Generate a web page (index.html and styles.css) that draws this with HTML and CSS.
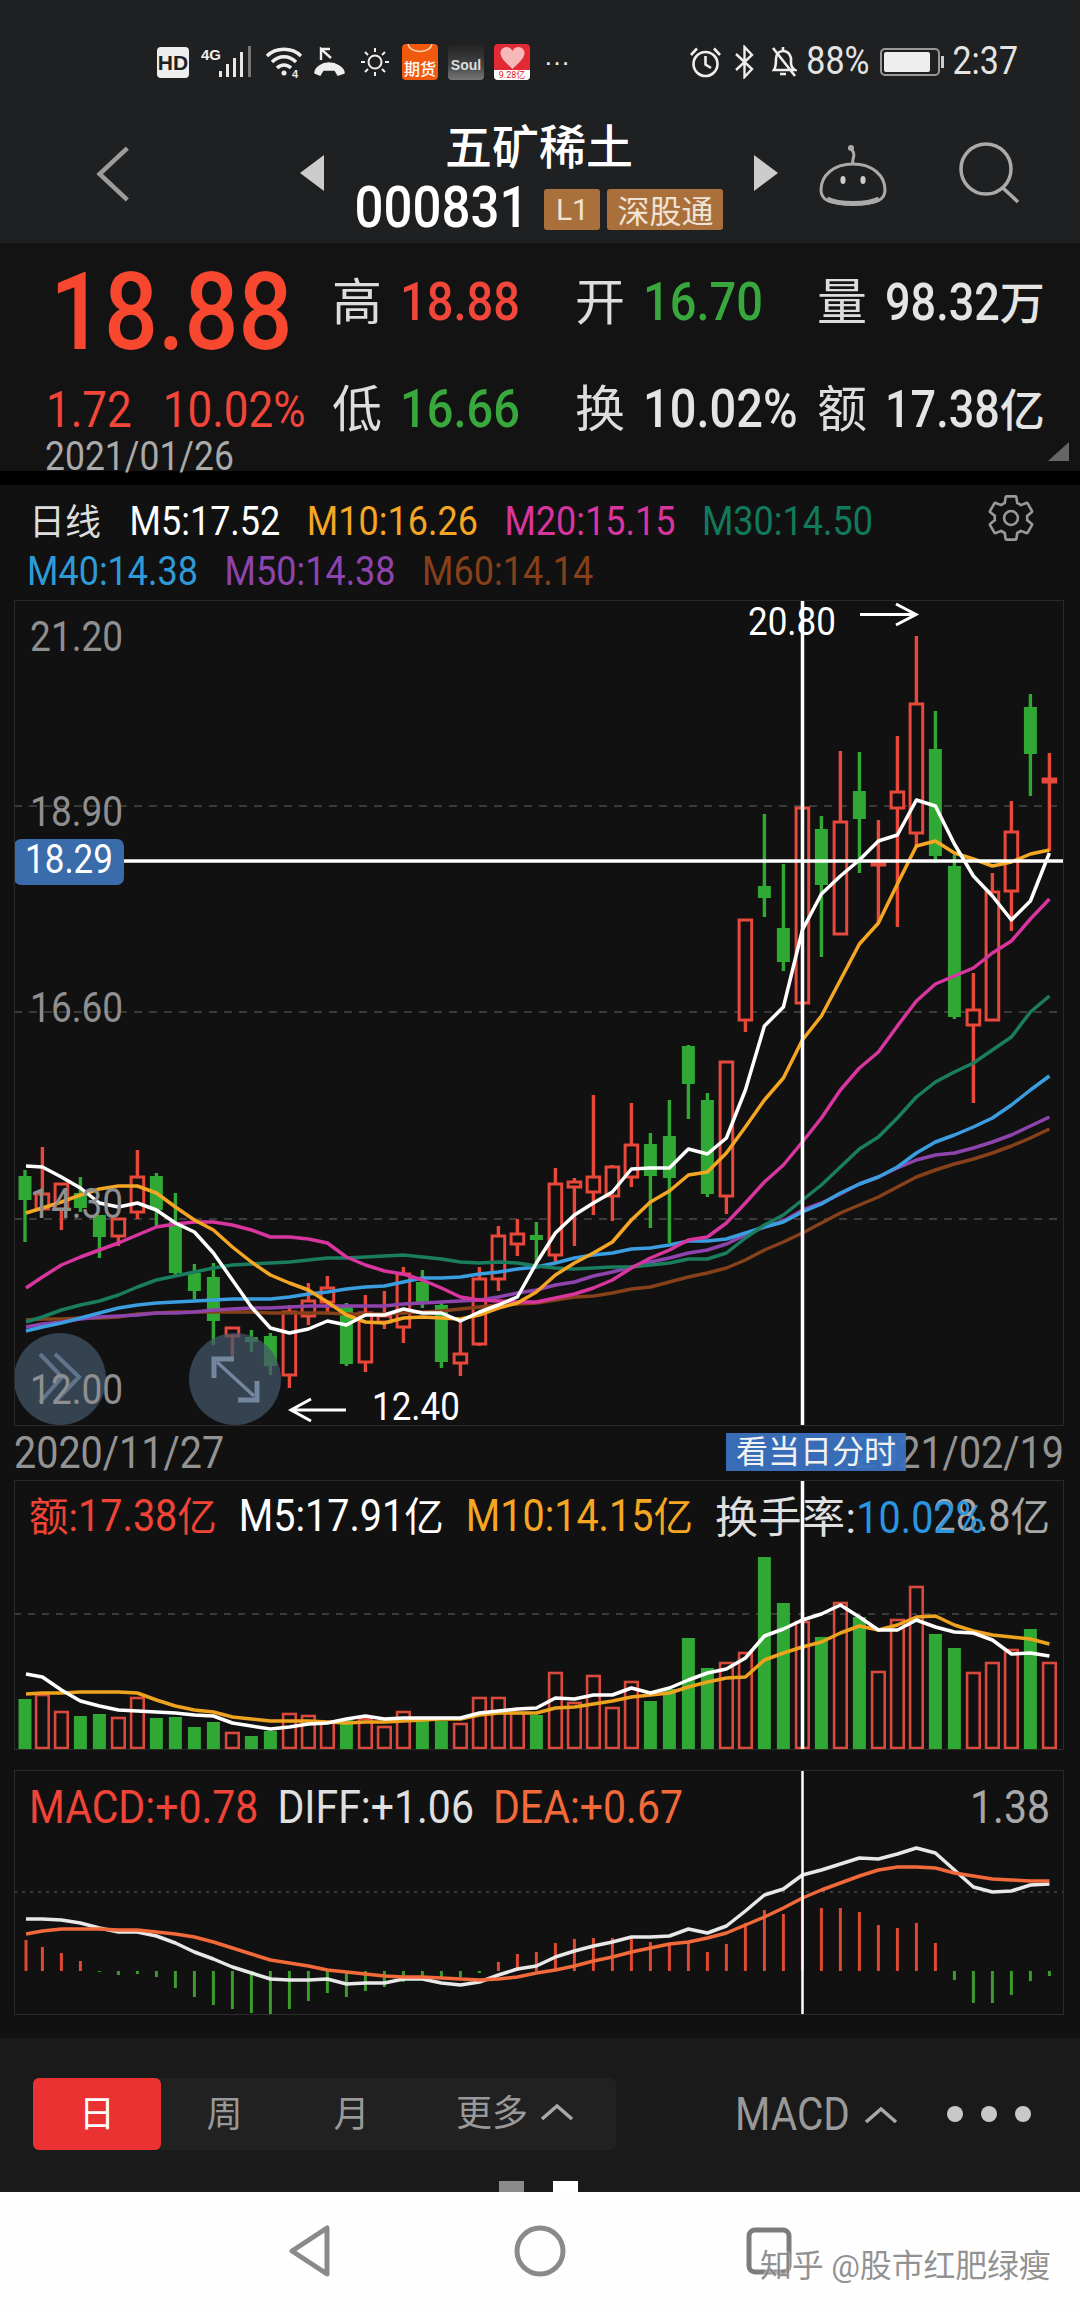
FILE: index.html
```html
<!DOCTYPE html>
<html lang="zh">
<head>
<meta charset="utf-8">
<title>五矿稀土 000831</title>
<link rel="stylesheet" href="styles.css">
</head>
<body>
<div class="screen">
  <header class="top">
    <div class="status">
      <div class="status-left">
        <span class="hd">HD</span>
        <svg class="ic-signal" viewBox="0 0 52 32"><text x="0" y="14" class="sig4g">4G</text><rect x="18" y="25" width="3" height="6" fill="#e8e8e8"/><rect x="25" y="18" width="3" height="13" fill="#e8e8e8"/><rect x="32" y="12" width="3" height="19" fill="#e8e8e8"/><rect x="39" y="6" width="3" height="25" fill="#e8e8e8"/><rect x="47" y="0" width="3" height="31" fill="#777"/></svg>
        <svg class="ic-wifi" viewBox="0 0 38 32" fill="none" stroke="#eee" stroke-width="3.4"><path d="M2 10C11 1 27 1 36 10"/><path d="M7 16C14 9 24 9 31 16"/><path d="M12 22C16 18 22 18 26 22"/><circle cx="19" cy="27" r="2.5" fill="#eee" stroke="none"/><text x="27" y="32" class="wifi4" stroke="none">4</text></svg>
        <svg class="ic-missed" viewBox="0 0 33 30" fill="none" stroke="#eee" stroke-width="3"><path d="M8 13V2L18 11M8 2L17 2" stroke-width="2.4"/><path d="M2 26C2 21 9 16 16 16S31 21 31 26L25 28L22 23H10L7 28Z" fill="#eee" stroke-width="1.5"/></svg>
        <svg class="ic-sun" viewBox="0 0 30 30" fill="none" stroke="#eee" stroke-width="2"><circle cx="15" cy="15" r="6.5"/><path d="M15 1V5M15 25V29M1 15H5M25 15H29M5 5L8 8M22 22L25 25M25 5L22 8M8 22L5 25"/></svg>
        <span class="app app-orange"><svg viewBox="0 0 36 12" class="app-top"><path d="M6 0C8 10 28 10 30 0" fill="none" stroke="#ffd0b0" stroke-width="1.5"/></svg>期货</span>
        <span class="app app-soul">Soul</span>
        <span class="app app-red"><svg viewBox="0 0 24 22" class="app-heart"><path d="M12 21C4 14 1 10 1 6.500C1 3 4 1 6.500 1C9 1 11 2.500 12 4.500C13 2.500 15 1 17.500 1C20 1 23 3 23 6.500C23 10 20 14 12 21Z" fill="#f6b8b8"/></svg><span class="app-red-t">9.28亿</span></span>
        <span class="more">···</span>
      </div>
      <div class="status-right">
        <svg class="ic-alarm" viewBox="0 0 33 32" fill="none" stroke="#eee" stroke-width="2.6"><circle cx="16.500" cy="18" r="12"/><path d="M16.500 10V18.500L22 22M2 9L8 2.500M31 9L25 2.500"/></svg>
        <svg class="ic-bt" viewBox="0 0 23 34" fill="none" stroke="#eee" stroke-width="2.4"><path d="M3 9L19 24L11.500 32V2L19 10L3 25"/></svg>
        <svg class="ic-bell" viewBox="0 0 27 34" fill="none" stroke="#eee" stroke-width="2.6"><path d="M4 25C6 22 6 17 6 14C6 9 9 6 13 6C17 6 20 9 21 13L21 18C21 21 22 23 25 25ZM13 6V2M10 29H16M3 3L25 31"/></svg>
        <span class="pct"><span class="tall">88%</span></span>
        <span class="batt"><span class="batt-fill"></span></span>
        <span class="clock"><span class="tall">2:37</span></span>
      </div>
    </div>
    <div class="nav-head">
      <svg class="ic-back" viewBox="0 0 38 62" fill="none" stroke="#9c9c9c" stroke-width="5"><path d="M35 2L4 31L35 60"/></svg>
      <svg class="tri tri-l" viewBox="0 0 24 36"><path d="M24 0V36L0 18Z" fill="#ccc"/></svg>
      <div class="name">
        <div class="title">五矿稀土</div>
        <div class="code-row">
          <span class="code"><span class="tall">000831</span></span>
          <span class="tag tag-l1">L1</span>
          <span class="tag tag-sg">深股通</span>
        </div>
      </div>
      <svg class="tri tri-r" viewBox="0 0 24 36"><path d="M0 0V36L24 18Z" fill="#ccc"/></svg>
      <svg class="ic-robot" viewBox="0 0 68 62" fill="none" stroke="#aaa" stroke-width="3"><path d="M34 20C32 14 38 12 33 6" /><circle cx="25" cy="4" r="3" fill="#aaa" stroke="none" transform="translate(7 0)"/><path d="M34 20C14 20 2 32 2 46C2 56 10 60 34 60C58 60 66 56 66 46C66 32 54 20 34 20Z"/><path d="M8 55C20 61 48 61 60 55" stroke-width="5"/><ellipse cx="24" cy="36" rx="2.600" ry="4" fill="#ccc" stroke="none"/><ellipse cx="44" cy="36" rx="2.600" ry="4" fill="#ccc" stroke="none"/></svg>
      <svg class="ic-search" viewBox="0 0 62 62" fill="none" stroke="#aaa" stroke-width="3.500"><circle cx="28" cy="27" r="25"/><path d="M45 46L60 60"/></svg>
    </div>
  </header>

  <section class="quote">
    <div class="q-price"><span class="tall big">18.88</span></div>
    <div class="q-cell"><span class="q-l">高</span><span class="q-v up"><span class="tall">18.88</span></span></div>
    <div class="q-cell"><span class="q-l">开</span><span class="q-v down"><span class="tall">16.70</span></span></div>
    <div class="q-cell"><span class="q-l">量</span><span class="q-v white"><span class="tall">98.32</span>万</span></div>
    <div class="q-change up"><span class="tall">1.72</span><span class="tall">10.02%</span></div>
    <div class="q-cell"><span class="q-l">低</span><span class="q-v down"><span class="tall">16.66</span></span></div>
    <div class="q-cell"><span class="q-l">换</span><span class="q-v white q-wide"><span class="tall">10.02%</span></span></div>
    <div class="q-cell"><span class="q-l">额</span><span class="q-v white"><span class="tall">17.38</span>亿</span></div>
    <div class="q-date"><span class="tall">2021/01/26</span></div>
    <span class="corner"></span>
  </section>

  <div class="divider"></div>

  <section class="chart">
    <div class="legend">
      <div class="leg-row">
        <span class="leg-name">日线</span>
        <span class="c-white"><span class="tall">M5:17.52</span></span>
        <span class="c-ora"><span class="tall">M10:16.26</span></span>
        <span class="c-mag"><span class="tall">M20:15.15</span></span>
        <span class="c-grn"><span class="tall">M30:14.50</span></span>
        <svg class="ic-gear" viewBox="0 0 24 24" fill="none" stroke="#999" stroke-width="1.200"><path d="M19.430 12.980c.04-.32.07-.64.07-.98 0-.34-.03-.66-.07-.98l2.110-1.650c.19-.15.24-.42.12-.64l-2-3.460c-.09-.16-.26-.25-.44-.25-.06 0-.12.01-.17.03l-2.490 1c-.52-.4-1.080-.73-1.690-.98l-.38-2.650C14.460 2.180 14.250 2 14 2h-4c-.25 0-.46.18-.49.42l-.38 2.650c-.61.25-1.170.59-1.690.98l-2.490-1c-.06-.02-.12-.03-.18-.03-.17 0-.34.09-.43.25l-2 3.460c-.13.22-.07.49.12.64l2.110 1.650c-.04.32-.07.65-.07.98 0 .33.03.66.07.98l-2.110 1.650c-.19.15-.24.42-.12.64l2 3.460c.09.16.26.25.44.25.06 0 .12-.01.17-.03l2.490-1c.52.4 1.080.73 1.690.98l.38 2.650c.03.24.24.42.49.42h4c.25 0 .46-.18.49-.42l.38-2.650c.61-.25 1.170-.59 1.690-.98l2.490 1c.06.02.12.03.18.03.17 0 .34-.09.43-.25l2-3.460c.12-.22.07-.49-.12-.64l-2.110-1.650z"/><circle cx="12" cy="12" r="3.200"/></svg>
      </div>
      <div class="leg-row">
        <span class="c-blu"><span class="tall">M40:14.38</span></span>
        <span class="c-pur"><span class="tall">M50:14.38</span></span>
        <span class="c-bro"><span class="tall">M60:14.14</span></span>
      </div>
    </div>

    <div class="panel panel-main">
      <svg id="main" viewBox="14 600 1050 826" width="1050" height="826">
        <g id="main-plot"></g>
        <rect x="14" y="839" width="110" height="46" rx="7" fill="#3a6bab"/>
        <path d="M124 861H1063" stroke="#fff" stroke-width="3.500"/>
        <path d="M802.500 600V1426" stroke="#fff" stroke-width="3.500"/>
        <text class="axis-val on-blue" transform="translate(69 873) scale(1 1.140)" text-anchor="middle">18.29</text>
        <text class="axis-val mark" transform="translate(748 635) scale(1 1.100)">20.80</text>
        <path d="M860 614.500H915M896 604L916 614.500L896 625" fill="none" stroke="#fff" stroke-width="3"/>
        <text class="axis-val mark" transform="translate(372 1420) scale(1 1.100)">12.40</text>
        <path d="M346 1410H291M311 1399L291 1410L311 1421" fill="none" stroke="#fff" stroke-width="3"/>
        <circle cx="60" cy="1379" r="46" fill="#44566a" opacity=".72"/>
        <circle cx="235" cy="1379" r="46" fill="#44566a" opacity=".72"/>
        <path d="M40 1354L62 1377L40 1402M55 1354L79 1377L55 1402" fill="none" stroke="#62748c" stroke-width="4"/>
        <path d="M217 1362L254 1396" fill="none" stroke="#75869f" stroke-width="3.500"/>
        <path d="M214 1378V1359H234M257 1381V1400H238" fill="none" stroke="#75869f" stroke-width="5"/>
        <text class="axis" transform="translate(123 651) scale(1 1.140)" text-anchor="end">21.20</text>
        <text class="axis" transform="translate(123 826) scale(1 1.140)" text-anchor="end">18.90</text>
        <text class="axis" transform="translate(123 1022) scale(1 1.140)" text-anchor="end">16.60</text>
        <text class="axis" transform="translate(123 1218) scale(1 1.140)" text-anchor="end">14.30</text>
        <text class="axis" transform="translate(123 1404) scale(1 1.140)" text-anchor="end">12.00</text>
      </svg>
    </div>

    <div class="dates">
      <span><span class="tall">2020/11/27</span></span>
      <span><span class="tall">2021/02/19</span></span>
      <span class="day-btn">看当日分时</span>
    </div>

    <div class="panel panel-vol">
      <svg id="vol" viewBox="14 1480 1050 270" width="1050" height="270"><g id="vol-plot"></g><path d="M802.500 1480V1749" stroke="#fff" stroke-width="3.500"/></svg>
      <div class="sub-legend vol-legend">
        <span class="c-red">额:<span class="tall">17.38</span>亿</span>
        <span class="c-white"><span class="tall">M5:17.91</span>亿</span>
        <span class="c-ora"><span class="tall">M10:14.15</span>亿</span>
        <span class="c-lite"><span class="turn">换手率:</span><span class="c-sky"><span class="tall">10.02%</span></span></span>
        <span class="c-grey right-val"><span class="tall">28.8</span>亿</span>
      </div>
    </div>

    <div class="panel panel-macd">
      <svg id="macd" viewBox="14 1770 1050 245" width="1050" height="245"><g id="macd-plot"></g><path d="M802.500 1770V2015" stroke="#fff" stroke-width="2.500"/></svg>
      <div class="sub-legend macd-legend">
        <span class="c-red"><span class="tall">MACD:+0.78</span></span>
        <span class="c-lite"><span class="tall">DIFF:+1.06</span></span>
        <span class="c-org2"><span class="tall">DEA:+0.67</span></span>
        <span class="c-grey right-val"><span class="tall">1.38</span></span>
      </div>
    </div>
  </section>

  <section class="controls">
    <div class="seg">
      <span class="seg-item seg-on">日</span>
      <span class="seg-item">周</span>
      <span class="seg-item">月</span>
      <span class="seg-item seg-more">更多<svg class="caret" viewBox="0 0 34 16" fill="none" stroke="#a8a8a8" stroke-width="3.500"><path d="M2 15L17 2L32 15"/></svg></span>
    </div>
    <div class="ctl-macd"><span class="tall">MACD</span><svg class="caret" viewBox="0 0 34 16" fill="none" stroke="#a8a8a8" stroke-width="3.500"><path d="M2 15L17 2L32 15"/></svg></div>
    <div class="dots"><i></i><i></i><i></i></div>
    <div class="pager"><i class="p-off"></i><i class="p-on"></i></div>
  </section>

  <footer class="sysnav">
    <svg class="nav-ic" viewBox="0 0 60 52" fill="none" stroke="#8a8a8a" stroke-width="5" stroke-linejoin="round"><path d="M47 3V49L12 26Z"/></svg>
    <svg class="nav-ic" viewBox="0 0 60 52" fill="none" stroke="#8a8a8a" stroke-width="5"><circle cx="30" cy="26" r="23"/></svg>
    <svg class="nav-ic" viewBox="0 0 60 52" fill="none" stroke="#7c7c7c" stroke-width="5"><rect x="9" y="5" width="40" height="42" rx="6"/></svg>
    <span class="watermark">知乎 @股市红肥绿瘦</span>
  </footer>
</div>
<script src="script.js"></script>
</body>
</html>
```

FILE: styles.css
```css
* { box-sizing: border-box; }
html, body { margin: 0; padding: 0; background: #111; }
body { font-family: Roboto, "Noto Sans CJK SC", sans-serif; }
.screen { width: 1080px; height: 2310px; overflow: hidden; display: flex; flex-direction: column; }
.tall { display: inline-block; transform: scaleY(1.14); transform-origin: 50% 76%; }

/* header */
.top { height: 243px; background: #1f2021; display: flex; flex-direction: column; }
.status { height: 86px; padding: 44px 62px 0 157px; display: flex; justify-content: space-between; }
.status-left, .status-right { display: flex; align-items: center; height: 36px; }
.hd { width: 32px; height: 31px; background: #eee; color: #1f2021; border-radius: 4px; font: 700 21px/31px "Liberation Sans", sans-serif; text-align: center; }
.ic-signal { width: 52px; height: 32px; margin-left: 12px; }
.sig4g { font: 700 15px "Liberation Sans", sans-serif; fill: #eee; }
.ic-wifi { width: 38px; height: 32px; margin-left: 12px; }
.wifi4 { font: 700 11px "Liberation Sans", sans-serif; fill: #eee; }
.ic-missed { width: 33px; height: 30px; margin-left: 10px; }
.ic-sun { width: 30px; height: 30px; margin-left: 14px; }
.app { width: 36px; height: 36px; margin-left: 10px; border-radius: 4px; position: relative; display: flex; align-items: flex-end; justify-content: center; overflow: hidden; flex: none; }
.ic-sun + .app { margin-left: 12px; }
.app-orange { background: #f0590e; color: #fff; font-size: 16px; line-height: 20px; font-weight: 500; }
.app-top { position: absolute; left: 0; top: 0; width: 36px; height: 12px; }
.app-soul { background: linear-gradient(180deg, #222 0%, #444 60%, #777 100%); color: #ddd; font: 700 14px/30px "Liberation Sans", sans-serif; }
.app-red { background: #e12a34; flex-direction: column; align-items: center; justify-content: flex-start; }
.app-heart { width: 27px; height: 24px; margin-top: 2px; }
.app-red-t { background: #fff; color: #d22; width: 100%; font-size: 9px; line-height: 10px; text-align: center; }
.more { color: #eee; margin-left: 14px; font-size: 26px; line-height: 36px; letter-spacing: 0; font-family: "Liberation Sans", sans-serif; }
.ic-alarm { width: 33px; height: 32px; margin-left: -3px; }
.ic-bt { width: 23px; height: 34px; margin-left: 11px; }
.ic-bell { width: 27px; height: 34px; margin-left: 14px; }
.pct { color: #e4e4e4; font-size: 34px; line-height: 36px; margin-left: 9px; }
.batt { width: 60px; height: 28px; margin-left: 11px; border: 2px solid #999; border-radius: 5px; padding: 2px; position: relative; flex: none; }
.batt::after { content: ""; position: absolute; right: -6px; top: 6px; width: 3px; height: 12px; background: #ccc; }
.batt-fill { display: block; height: 100%; width: 46px; background: #eee; border-radius: 2px; }
.clock { color: #e4e4e4; font-size: 34px; line-height: 36px; margin-left: 12px; }

.nav-head { flex: 1; position: relative; display: flex; padding-left: 96px; }
.ic-back { width: 34px; height: 62px; margin-top: 57px; flex: none; }
.tri { width: 24px; height: 36px; flex: none; margin-top: 69px; }
.tri-l { margin-left: 170px; }
.name { width: 430px; display: flex; flex-direction: column; align-items: center; flex: none; }
.title { color: #fff; font-size: 47px; line-height: 56px; font-weight: 500; margin-top: 34px; }
.code-row { display: flex; align-items: center; height: 44px; margin-top: 11px; gap: 7px; }
.code { color: #fff; font-size: 51px; line-height: 44px; margin-right: 9px; font-weight: 500; }
.tag { height: 41px; background: #a9703c; color: #efe3d5; border-radius: 3px; display: flex; align-items: center; justify-content: center; font-size: 30px; }
.tag-l1 { width: 56px; }
.tag-sg { width: 116px; font-size: 32px; }
.tri-r { margin-left: 0; }
.ic-robot { width: 68px; height: 62px; margin: 58px 0 0 41px; flex: none; }
.ic-search { width: 62px; height: 62px; margin: 56px 0 0 71px; flex: none; }

/* quote */
.quote { height: 228px; background: #131313; display: grid; grid-template-columns: 332px 243px 242px 263px; grid-template-rows: 125px 75px 28px; position: relative; }
.q-price { padding: 19px 0 0 50px; line-height: 110px; }
.big { font-size: 95px; color: #f8472f; line-height: 110px; font-weight: 500; }
.q-cell { display: flex; align-items: baseline; }
.q-l { color: #ddd; font-size: 50px; width: 68px; line-height: 68px; flex: none; }
.q-v { font-size: 47px; line-height: 68px; font-weight: 500; white-space: nowrap; }
.q-v.white { font-size: 45px; }
.q-v.q-wide { font-size: 47px; }
.quote > .q-cell:nth-child(-n+4) { padding-top: 26px; }
.quote > .q-cell:nth-child(n+6) { padding-top: 8px; }
.up { color: #f2463a; }
.down { color: #38a83c; }
.white { color: #e4e4e4; }
.q-change { grid-column: 1; font-size: 44px; line-height: 68px; padding: 10px 0 0 46px; display: flex; gap: 31px; white-space: nowrap; }
.q-date { grid-column: 1 / span 4; font-size: 35.5px; line-height: 28px; color: #aaa; padding-left: 45px; }
.corner { position: absolute; right: 11px; top: 199px; width: 21px; height: 19px; background: #666; clip-path: polygon(100% 0, 100% 100%, 0 100%); }
.divider { height: 14px; background: #000; }

/* chart */
.chart { background: #111; height: 1553px; flex: none; }
.legend { padding: 13px 0 2px 29px; height: 115px; font-size: 36px; line-height: 50px; }
.leg-row { display: flex; gap: 26.5px; white-space: nowrap; height: 50px; }
.leg-name { color: #ddd; margin-right: 2px; }
.ic-gear { width: 52px; height: 52px; position: absolute; left: 985px; top: 492px; }
.c-white { color: #fff; }
.c-ora { color: #f5a623; }
.c-mag { color: #d9359f; }
.c-grn { color: #117a5c; }
.c-blu { color: #2f9ad8; margin-left: -2px; }
.c-pur { color: #8e44ad; }
.c-bro { color: #86401a; }
.c-red { color: #ef4436; }
.c-lite { color: #e0e0e0; }
.c-sky { color: #2a95e0; }
.c-grey { color: #a8a8a8; }
.c-org2 { color: #f2693a; }

.panel { margin-left: 14px; width: 1050px; position: relative; outline: 1px solid #2a2a2a; outline-offset: -1px; }
.panel svg { display: block; }
.panel-macd { margin-top: 20px; }
.axis { font-size: 37px; fill: #8f8f8f; }
.axis-val { font-size: 35px; fill: #fff; }
.dates { height: 54px; margin: 0 16px 0 14px; padding-top: 4px; display: flex; justify-content: space-between; color: #939393; font-size: 39.5px; line-height: 50px; position: relative; white-space: nowrap; }
.day-btn { position: absolute; left: 712px; top: 7px; width: 180px; height: 38px; background: rgba(58, 112, 190, .96); color: #f2f2f2; font-size: 32px; line-height: 38px; text-align: center; }
.sub-legend { position: absolute; left: 15px; right: 14px; display: flex; white-space: nowrap; font-size: 39.5px; line-height: 50px; }
.vol-legend { top: 13px; gap: 22px; }
.macd-legend { top: 14px; gap: 19px; font-size: 41px; left: 15px; }
.right-val { position: absolute; right: 0; top: 0; }
.vol-legend .c-lite { z-index: 1; position: relative; }
.turn { font-size: 43px; letter-spacing: .5px; }

/* bottom controls */
.controls { height: 154px; background: #1a1a1a; position: relative; flex: none; }
.seg { position: absolute; left: 33px; top: 40px; width: 583px; height: 72px; background: #212121; border-radius: 6px; display: flex; }
.seg-item { color: #999; font-size: 36px; line-height: 74px; text-align: center; width: 127px; flex: none; }
.seg-on { background: #e93231; color: #fff; border-radius: 6px; width: 128px; }
.seg-more { margin-left: 41px; width: 160px; display: flex; align-items: center; gap: 12px; text-align: left; }
.caret { width: 34px; height: 16px; flex: none; margin-top: -4px; }
.ctl-macd { position: absolute; left: 735px; top: 43px; height: 72px; display: flex; align-items: center; gap: 14px; color: #999; font-size: 40.5px; line-height: 72px; }
.dots { position: absolute; left: 947px; top: 68px; display: flex; gap: 18px; }
.dots i { width: 16px; height: 16px; background: #c8c8c8; border-radius: 50%; }
.pager { position: absolute; left: 499px; top: 143px; display: flex; gap: 29px; }
.pager i { width: 25px; height: 11px; display: block; }
.p-off { background: #8a8a8a; }
.p-on { background: #fff; }

.sysnav { height: 118px; background: #fefefe; flex: none; display: flex; justify-content: center; gap: 170px; padding-top: 33px; position: relative; }
.nav-ic { width: 60px; height: 52px; flex: none; }
.watermark { position: absolute; left: 760px; top: 54px; font-size: 32px; line-height: 40px; color: rgba(110, 110, 110, .75); white-space: nowrap; text-shadow: 0 0 3px #fff; letter-spacing: -.2px; }
```

FILE: script.js
```js
const NS = 'http://www.w3.org/2000/svg';
const X = i => 23.4 + 19 * i;
const RED = '#e8493a', GREEN = '#2fa834';

function el(parent, tag, attrs) {
  const node = document.createElementNS(NS, tag);
  for (const k in attrs) node.setAttribute(k, attrs[k]);
  parent.appendChild(node);
  return node;
}
function grid(g, ys, x1, x2, dash) {
  ys.forEach(y => el(g, 'path', { d: `M${x1} ${y}H${x2}`, stroke: '#3a3a3a', 'stroke-width': 2, 'stroke-dasharray': dash, fill: 'none' }));
}
function line(g, ys, color, w) {
  const pts = ys.map((y, i) => `${i === 0 ? Math.max(X(0), 26) : X(i)},${y}`).join(' ');
  el(g, 'polyline', { points: pts, fill: 'none', stroke: color, 'stroke-width': w, 'stroke-linejoin': 'round' });
}

/* colour, wick top, wick bottom, body top, body bottom */
const candles = [
['g',1170,1242,1176,1200],['r',1147,1210,1193,1210],['r',1183,1230,1183,1210],['g',1177,1212,1193,1208],
['g',1215,1258,1215,1237],['r',1218,1246,1218,1237],['r',1150,1219,1176,1213],['g',1173,1226,1176,1210],
['g',1193,1276,1222,1273],['g',1264,1299,1273,1291],['g',1263,1345,1277,1321],['r',1327,1357,1327,1337],
['g',1330,1352,1337,1342],['g',1333,1375,1336,1366],['r',1305,1388,1311,1376],['r',1283,1325,1300,1317],
['r',1276,1313,1287,1303],['g',1303,1366,1305,1364],['r',1295,1372,1312,1363],['r',1291,1329,1315,1323],
['r',1267,1343,1273,1328],['g',1270,1308,1282,1303],['g',1303,1368,1305,1362],['r',1322,1376,1353,1364],
['r',1267,1346,1278,1345],['r',1226,1291,1235,1280],['r',1219,1256,1233,1245],['g',1222,1265,1235,1240],
['r',1168,1262,1183,1256],['r',1178,1246,1181,1188],['r',1095,1215,1176,1193],['r',1165,1221,1166,1197],
['r',1103,1187,1144,1178],['g',1133,1228,1144,1176],['g',1100,1243,1136,1178],['g',1045,1119,1046,1084],
['g',1093,1197,1100,1194],['r',1061,1214,1061,1197],['r',919,1032,919,1021],['g',814,917,886,898],
['g',864,971,928,962],['r',807,1004,807,1004],['g',816,957,829,885],['r',751,935,821,935],
['g',752,873,791,819],['r',820,923,863,866],['r',736,927,791,809],['r',636,848,703,834],
['g',711,863,749,856],['g',855,1019,866,1017],['r',973,1103,1009,1026],['r',873,1021,891,1021],
['r',801,931,831,892],['g',694,796,707,754],['r',753,851,778,783]
];
const ma5 = [1166,1167,1177,1188,1203,1207,1203,1210,1223,1232,1253,1280,1307,1328,1333,1329,1321,1325,1315,1315,1309,1313,1313,1321,1312,1305,1297,1263,1233,1215,1203,1192,1169,1168,1168,1149,1154,1138,1090,1026,1007,930,894,876,860,841,835,800,806,844,876,896,920,901,853];
const ma10 = [1213,1208,1202,1195,1189,1186,1186,1193,1207,1220,1230,1247,1262,1275,1283,1290,1302,1315,1322,1323,1318,1317,1318,1319,1315,1308,1303,1292,1275,1263,1253,1242,1220,1202,1191,1175,1172,1153,1127,1100,1078,1040,1016,980,944,923,884,846,841,853,859,866,862,854,850];
const ma20 = [1288,1277,1265,1257,1250,1243,1235,1227,1224,1222,1222,1225,1230,1237,1237,1239,1243,1257,1265,1271,1274,1280,1288,1297,1300,1301,1302,1302,1298,1294,1288,1280,1268,1258,1250,1240,1237,1223,1203,1182,1165,1142,1118,1090,1068,1052,1026,1001,984,976,968,953,941,919,899];
const ma30 = [1322,1317,1310,1305,1301,1295,1287,1280,1276,1272,1268,1265,1264,1263,1262,1260,1258,1258,1257,1256,1255,1257,1259,1262,1263,1262,1263,1266,1268,1269,1268,1267,1267,1265,1263,1259,1259,1253,1238,1225,1215,1200,1185,1167,1149,1137,1118,1097,1082,1072,1063,1050,1037,1012,996];
const ma40 = [1331,1327,1323,1318,1313,1308,1305,1303,1302,1301,1300,1299,1299,1299,1297,1294,1292,1289,1287,1286,1282,1278,1278,1277,1274,1272,1269,1267,1263,1258,1255,1253,1249,1248,1245,1241,1241,1239,1233,1227,1222,1212,1204,1193,1184,1177,1167,1153,1142,1135,1127,1118,1105,1090,1076];
const ma50 = [1327,1324,1322,1319,1317,1316,1315,1313,1313,1312,1310,1309,1308,1308,1307,1306,1306,1306,1306,1306,1304,1303,1302,1301,1300,1297,1293,1290,1285,1282,1276,1272,1267,1262,1258,1253,1250,1244,1235,1227,1221,1210,1203,1194,1184,1177,1168,1160,1155,1153,1148,1142,1135,1126,1117];
const ma60 = [1320,1319,1319,1318,1318,1317,1314,1313,1312,1312,1312,1312,1312,1313,1313,1313,1313,1314,1314,1314,1313,1312,1311,1309,1307,1305,1304,1303,1300,1297,1296,1293,1289,1287,1282,1277,1273,1268,1260,1250,1242,1233,1223,1213,1205,1197,1187,1177,1170,1164,1159,1153,1146,1138,1129];

const vols = [1699,1695,1712,1716,1714,1718,1698,1718,1717,1727,1722,1733,1736,1731,1714,1716,1722,1720,1719,1727,1712,1718,1721,1724,1698,1698,1713,1715,1673,1703,1676,1708,1682,1701,1689,1638,1668,1663,1653,1557,1603,1622,1637,1603,1617,1672,1620,1587,1634,1648,1673,1663,1650,1629,1663];
const volW = [1674,1677,1690,1701,1706,1710,1711,1712,1713,1715,1716,1723,1726,1729,1727,1724,1723,1719,1716,1719,1718,1718,1718,1718,1713,1711,1709,1708,1698,1699,1695,1695,1688,1693,1688,1680,1673,1669,1658,1636,1629,1620,1614,1605,1617,1630,1630,1620,1627,1632,1633,1640,1654,1653,1656];
const volO = [1694,1693,1693,1692,1692,1692,1693,1700,1706,1710,1712,1717,1719,1721,1721,1721,1722,1723,1722,1722,1721,1720,1719,1719,1715,1713,1713,1713,1708,1707,1704,1701,1697,1695,1693,1687,1682,1678,1677,1660,1653,1647,1642,1633,1626,1630,1625,1617,1616,1625,1631,1635,1637,1639,1644];

const macdBars = [1940,1947,1953,1961,1972,1975,1974,1977,1988,1997,2005,2009,2013,2014,2009,2001,1993,1997,1991,1987,1982,1979,1979,1977,1973,1962,1954,1952,1943,1939,1938,1938,1938,1942,1945,1941,1952,1944,1923,1910,1914,1900,1908,1908,1912,1925,1928,1923,1943,1980,2003,2003,1995,1981,1976];
const macdW = [1919,1919,1920,1923,1928,1932,1932,1936,1943,1952,1959,1967,1973,1979,1980,1980,1979,1984,1983,1983,1979,1979,1983,1985,1982,1975,1969,1966,1957,1951,1946,1942,1937,1937,1936,1929,1933,1926,1911,1895,1889,1875,1870,1864,1858,1859,1854,1848,1853,1870,1887,1892,1891,1885,1884];
const macdO = [1934,1931,1929,1929,1929,1930,1930,1932,1934,1937,1942,1948,1954,1960,1963,1966,1970,1972,1974,1976,1977,1977,1978,1979,1980,1979,1977,1973,1970,1966,1961,1957,1952,1948,1944,1942,1938,1933,1925,1917,1908,1898,1890,1883,1876,1870,1867,1867,1868,1873,1876,1879,1880,1881,1881];

/* main chart */
const plot = document.getElementById('main-plot');
grid(plot, [806, 1012, 1219], 14, 1063, '8 7');
candles.forEach((c, i) => {
  const x = X(i), color = c[0] === 'r' ? RED : GREEN;
  const cx = i === 0 ? 25 : x;
  if (c[1] < c[3]) el(plot, 'path', { d: `M${cx} ${c[1]}V${c[3]}`, stroke: color, 'stroke-width': 3.4 });
  if (c[2] > c[4]) el(plot, 'path', { d: `M${cx} ${c[4]}V${c[2]}`, stroke: color, 'stroke-width': 3.4 });
  const h = Math.max(c[4] - c[3], 3);
  if (c[0] === 'r') {
    el(plot, 'rect', { x: cx - 6.3, y: c[3] + 1, width: 12.6, height: Math.max(h - 2, 1), fill: '#111', stroke: color, 'stroke-width': 3 });
  } else {
    el(plot, 'rect', { x: cx - 6.5, y: c[3], width: 13, height: h, fill: color });
  }
});
line(plot, ma60, '#86401a', 3.5);
line(plot, ma50, '#8e44ad', 3.5);
line(plot, ma40, '#3a9ee0', 3.5);
line(plot, ma30, '#1a7d5e', 3.5);
line(plot, ma20, '#d9359f', 3.5);
line(plot, ma10, '#f5a623', 3.5);
line(plot, ma5, '#fff', 3.5);

/* volume */
const vp = document.getElementById('vol-plot');
grid(vp, [1614], 14, 1063, '7 7');
vols.forEach((top, i) => {
  const x = i === 0 ? 25 : X(i), up = candles[i][0] === 'r';
  if (up) el(vp, 'rect', { x: x - 6.3, y: top, width: 12.6, height: 1748 - top, fill: 'none', stroke: '#d9493c', 'stroke-width': 2.6 });
  else el(vp, 'rect', { x: x - 6.5, y: top, width: 13, height: 1749 - top, fill: GREEN });
});
line(vp, volO, '#eea31f', 3.5);
line(vp, volW, '#fff', 3.5);

/* MACD */
const mp = document.getElementById('macd-plot');
grid(mp, [1892], 14, 1063, '3 5');
macdBars.forEach((top, i) => {
  const x = i === 0 ? 26 : X(i), up = top < 1971;
  const y1 = up ? top : 1971, y2 = up ? 1971 : top;
  el(mp, 'path', { d: `M${x} ${y1}V${y2}`, stroke: up ? '#dd4a30' : '#3c9c2c', 'stroke-width': 3 });
});
line(mp, macdW, '#e8e8e8', 3.5);
line(mp, macdO, '#f2693a', 3.5);
```
